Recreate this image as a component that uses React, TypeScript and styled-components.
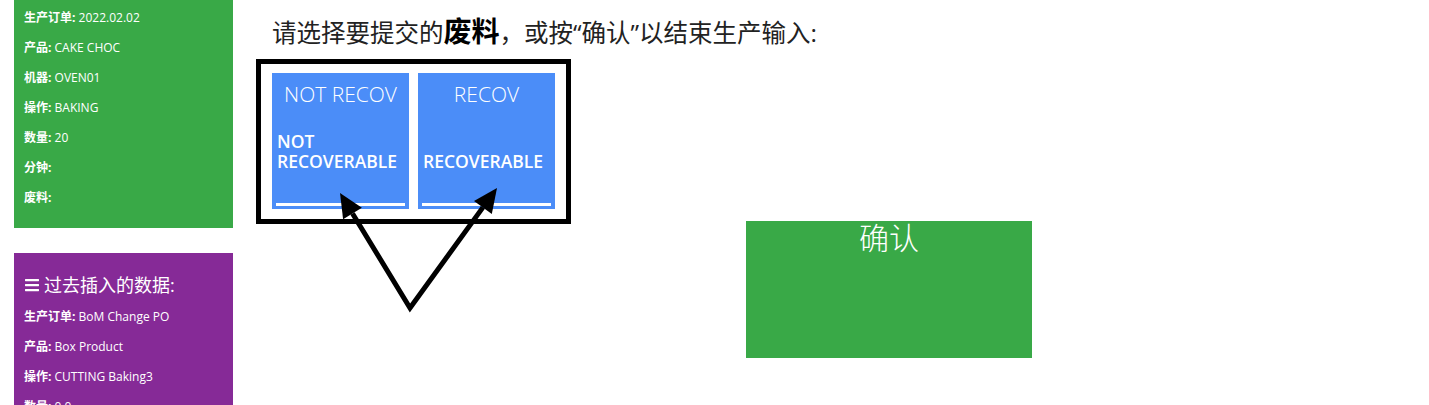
import React from 'react';
import styled, { createGlobalStyle } from 'styled-components';
import { FaBars } from 'react-icons/fa';

const GlobalStyle = createGlobalStyle`
  body {
    margin: 0;
    background: #fff;
    font-family: 'Open Sans', 'Noto Sans CJK SC', sans-serif;
  }
`;

const Page = styled.div`
  display: flex;
  align-items: flex-start;
  height: 405px;
  overflow: hidden;
`;

const Sidebar = styled.div`
  width: 219px;
  padding-left: 14px;
  display: flex;
  flex-direction: column;
  gap: 25px;
`;

const Panel = styled.div<{ bg: string }>`
  background: ${({ bg }) => bg};
  color: #fff;
  padding: 3px 10px 15px;
`;

const PanelTitle = styled.div`
  display: flex;
  align-items: center;
  gap: 4px;
  font-size: 18px;
  line-height: 30px;
  margin: 14px 0 2px;
`;

const InfoLine = styled.div`
  font-size: 12px;
  line-height: 30px;
  white-space: nowrap;

  b {
    font-weight: 700;
  }
`;

const Main = styled.div`
  padding: 14px 0 0 23px;
`;

const Heading = styled.h2`
  margin: 0 0 9px 16px;
  font-size: 24.5px;
  line-height: 34px;
  font-weight: 400;
  color: #222;
  white-space: nowrap;

  strong {
    font-size: 28px;
    font-weight: 700;
    color: #000;
  }
`;

const Row = styled.div`
  position: relative;
  display: flex;
  align-items: flex-start;
`;

const ChoiceBox = styled.div`
  border: 5px solid #000;
  padding: 9px 11px 10px 11px;
  display: flex;
  gap: 9px;
`;

const Card = styled.div`
  width: 137px;
  height: 136px;
  box-sizing: border-box;
  background: #4b8df8;
  color: #fff;
  padding: 0 4px 3px;
  display: flex;
  flex-direction: column;
`;

const CardTitle = styled.div`
  padding-top: 8px;
  font-size: 21px;
  line-height: 26px;
  font-weight: 300;
  text-align: center;
  white-space: nowrap;
`;

const CardLabel = styled.div`
  height: 64px;
  display: flex;
  flex-direction: column;
  justify-content: flex-end;
  padding-left: 1px;
  font-size: 17.5px;
  line-height: 20px;
  font-weight: 600;
  white-space: nowrap;
`;

const CardBar = styled.div`
  margin-top: auto;
  height: 3px;
  background: #fff;
`;

const ConfirmButton = styled.div`
  margin: 162px 0 0 175px;
  width: 286px;
  height: 137px;
  background: #39a947;
  color: #fff;
  font-size: 30px;
  line-height: 34px;
  font-weight: 300;
  text-align: center;
`;

const Arrows = styled.svg`
  position: absolute;
  left: 0;
  top: 0;
  overflow: visible;
  pointer-events: none;
`;

const jobInfo = [
  ['生产订单', '2022.02.02'],
  ['产品', 'CAKE CHOC'],
  ['机器', 'OVEN01'],
  ['操作', 'BAKING'],
  ['数量', '20'],
  ['分钟', ''],
  ['废料', ''],
];

const pastInfo = [
  ['生产订单', 'BoM Change PO'],
  ['产品', 'Box Product'],
  ['操作', 'CUTTING Baking3'],
  ['数量', '0.0'],
];

const scraps = [
  { code: 'NOT RECOV', lines: ['NOT', 'RECOVERABLE'] },
  { code: 'RECOV', lines: ['RECOVERABLE'] },
];

const App: React.FC = () => {
  return (
    <>
      <GlobalStyle />
      <Page>
        <Sidebar>
          <Panel bg="#39a947">
            {jobInfo.map(([label, value]) => (
              <InfoLine key={label}>
                <b>{label}:</b> {value}
              </InfoLine>
            ))}
          </Panel>
          <Panel bg="#862a97">
            <PanelTitle>
              <FaBars size={16} />
              过去插入的数据:
            </PanelTitle>
            {pastInfo.map(([label, value]) => (
              <InfoLine key={label}>
                <b>{label}:</b> {value}
              </InfoLine>
            ))}
          </Panel>
        </Sidebar>

        <Main>
          <Heading>
            请选择要提交的<strong>废料</strong>，或按“确认”以结束生产输入:
          </Heading>
          <Row>
            <ChoiceBox>
              {scraps.map((s) => (
                <Card key={s.code}>
                  <CardTitle>{s.code}</CardTitle>
                  <CardLabel>
                    {s.lines.map((l) => (
                      <span key={l}>{l}</span>
                    ))}
                  </CardLabel>
                  <CardBar />
                </Card>
              ))}
            </ChoiceBox>
            <ConfirmButton>确认</ConfirmButton>
            <Arrows width="250" height="260" viewBox="0 0 250 260">
              <polyline
                points="96.5,154.5 154,249 226.9,148.4"
                fill="none"
                stroke="#000"
                strokeWidth="5"
                strokeLinejoin="miter"
              />
              <polygon points="84,134 105.9,148.8 87.1,160.2" fill="#000" />
              <polygon points="241,129 235.8,154.9 218,141.9" fill="#000" />
            </Arrows>
          </Row>
        </Main>
      </Page>
    </>
  );
};

export default App;
